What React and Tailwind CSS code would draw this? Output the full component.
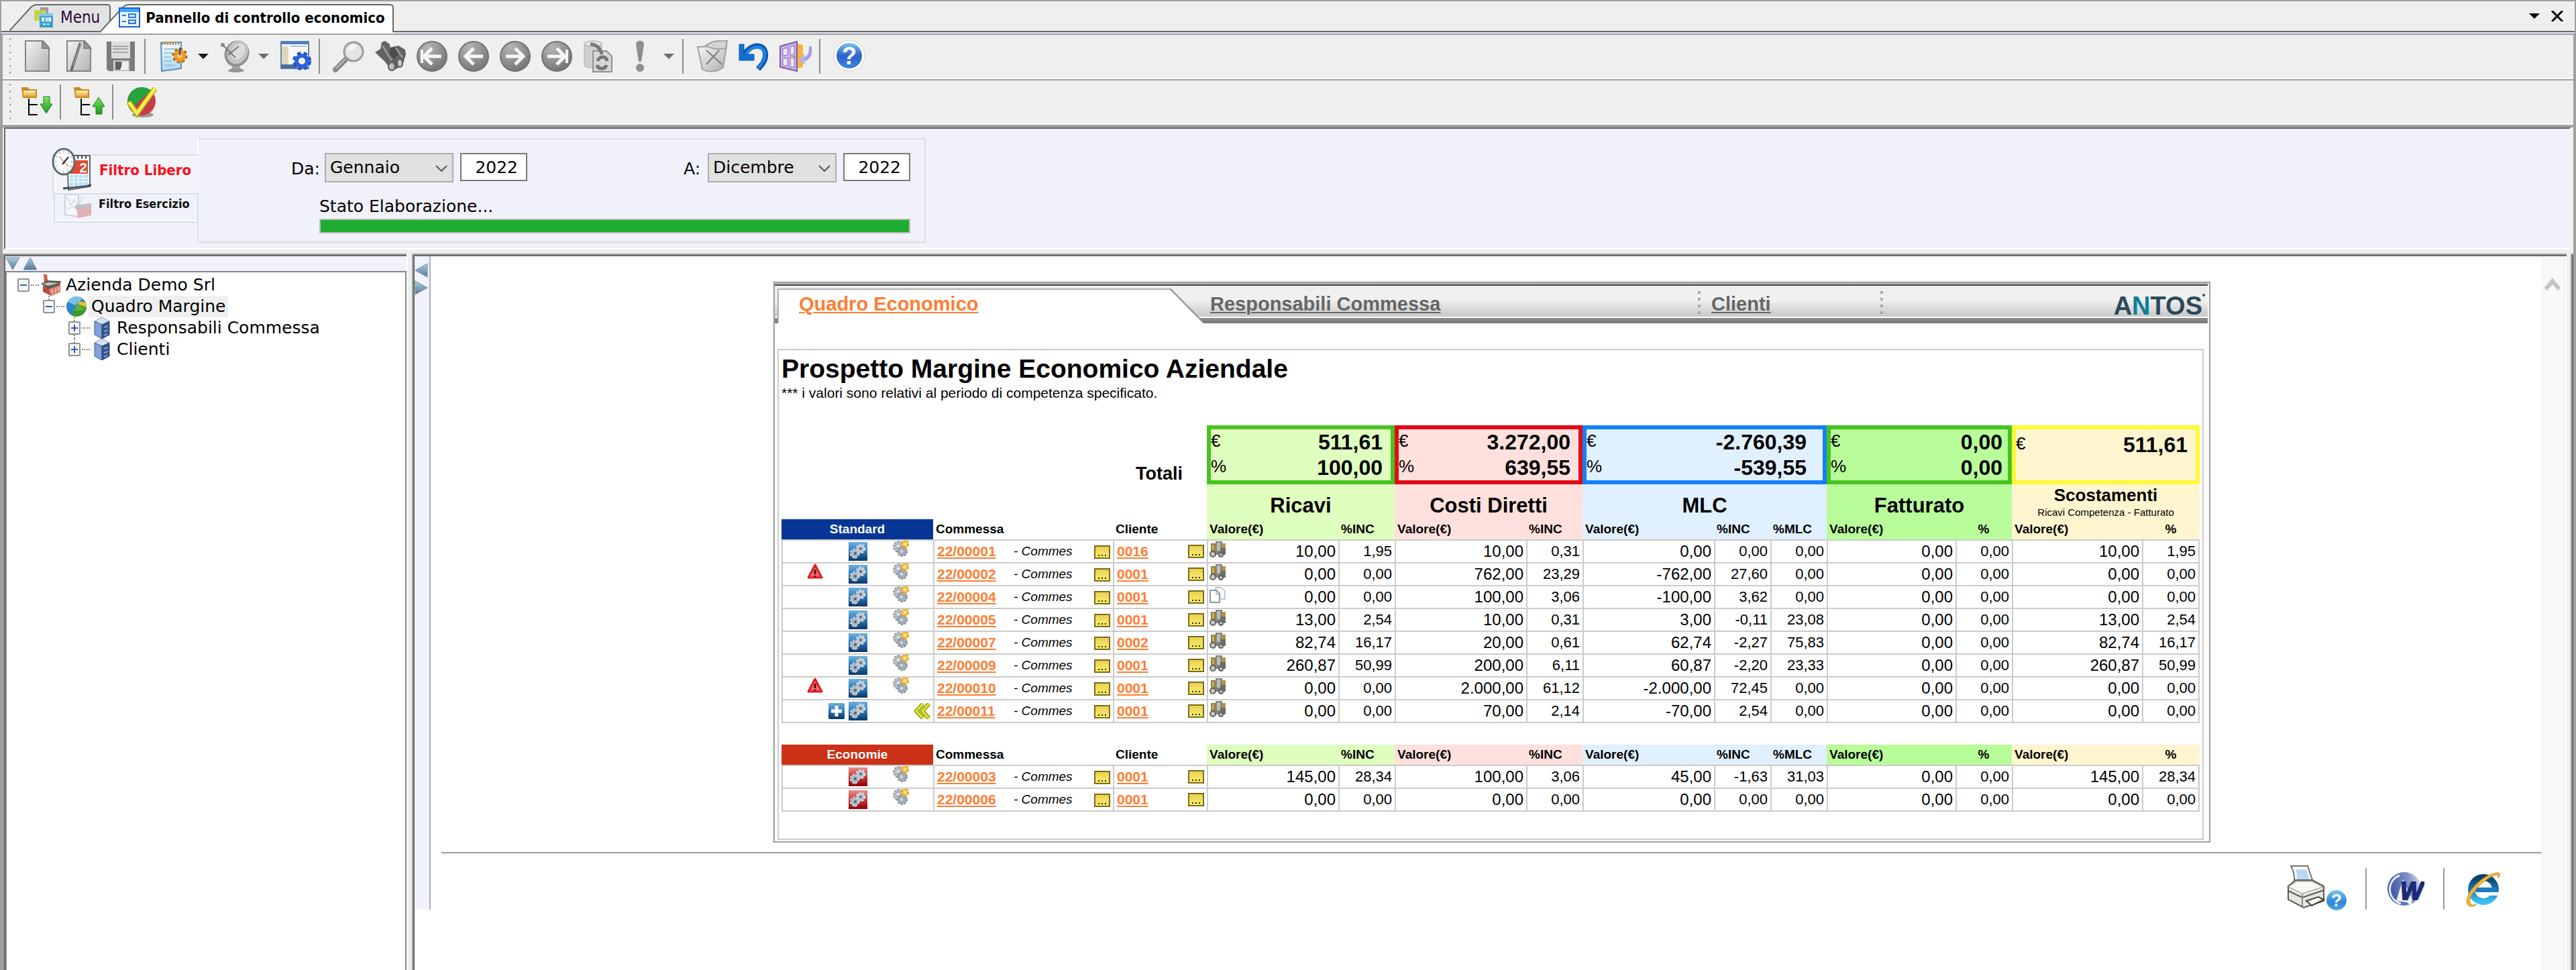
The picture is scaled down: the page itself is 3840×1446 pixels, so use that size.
import React from 'react';

/* ---------- shared gradients ---------- */

const Gradients = () => (
    <svg className="absolute w-0 h-0" aria-hidden="true">
        <defs>
            <linearGradient id="gSilver" x1="0" y1="0" x2="1" y2="1">
                <stop offset="0" stopColor="#f4f4f4" />
                <stop offset="1" stopColor="#b2b2b2" />
            </linearGradient>
            <radialGradient id="gCircle" cx="0.35" cy="0.2" r="0.9">
                <stop offset="0" stopColor="#b4b4b4" />
                <stop offset="1" stopColor="#707070" />
            </radialGradient>
            <linearGradient id="gBlue" x1="0" y1="0" x2="0" y2="1">
                <stop offset="0" stopColor="#6db3e0" />
                <stop offset="0.5" stopColor="#2c78b8" />
                <stop offset="1" stopColor="#0b3765" />
            </linearGradient>
            <linearGradient id="gRed" x1="0" y1="0" x2="0" y2="1">
                <stop offset="0" stopColor="#ee8c8c" />
                <stop offset="0.5" stopColor="#c63a3a" />
                <stop offset="1" stopColor="#8e0000" />
            </linearGradient>
            <linearGradient id="gHelp" x1="0" y1="0" x2="0" y2="1">
                <stop offset="0" stopColor="#7cc4f8" />
                <stop offset="0.5" stopColor="#2f62cc" />
                <stop offset="1" stopColor="#3a82e0" />
            </linearGradient>
            <linearGradient id="gHelpLight" x1="0" y1="0" x2="0" y2="1">
                <stop offset="0" stopColor="#7cc4f8" />
                <stop offset="0.6" stopColor="#2f86d8" />
                <stop offset="1" stopColor="#4aa4ee" />
            </linearGradient>
            <linearGradient id="gGold" x1="0" y1="0" x2="0" y2="1">
                <stop offset="0" stopColor="#fff3b4" />
                <stop offset="1" stopColor="#e0a030" />
            </linearGradient>
            <linearGradient id="gGreen" x1="0" y1="0" x2="0" y2="1">
                <stop offset="0" stopColor="#7fe06a" />
                <stop offset="1" stopColor="#1f9a1c" />
            </linearGradient>
            <linearGradient id="gNote" x1="0" y1="0" x2="0" y2="1">
                <stop offset="0" stopColor="#e8cf4e" />
                <stop offset="0.4" stopColor="#f0dc60" />
                <stop offset="1" stopColor="#fbf060" />
            </linearGradient>
            <linearGradient id="gArrow" x1="0" y1="0" x2="0" y2="1">
                <stop offset="0" stopColor="#a9cde0" />
                <stop offset="1" stopColor="#587a94" />
            </linearGradient>
            <linearGradient id="gSky" x1="0" y1="0" x2="0" y2="1">
                <stop offset="0" stopColor="#f2fafe" />
                <stop offset="1" stopColor="#a8d8f2" />
            </linearGradient>
            <linearGradient id="gIe" x1="0" y1="0" x2="0" y2="1">
                <stop offset="0" stopColor="#0e3f63" />
                <stop offset="0.55" stopColor="#1b7cc0" />
                <stop offset="1" stopColor="#3cc0f4" />
            </linearGradient>
            <linearGradient id="gWord" x1="0" y1="0.2" x2="1" y2="0">
                <stop offset="0" stopColor="#3a58a4" />
                <stop offset="0.6" stopColor="#7f92c8" />
                <stop offset="1" stopColor="#dfe4f2" />
            </linearGradient>
        </defs>
    </svg>
);

/* ---------- toolbar icons ---------- */

const Icon = ({ children }) => (
    <svg className="w-12 h-12" viewBox="0 0 48 48" aria-hidden="true">{children}</svg>
);

const NewDocIcon = () => (
    <Icon>
        <path d="M6 1h26l9 10v35H6z" fill="url(#gSilver)" stroke="#858585" strokeWidth="2" />
        <path d="M31 1v11h10z" fill="#9a9a9a" stroke="#858585" strokeWidth="2" />
    </Icon>
);

const EditDocIcon = () => (
    <Icon>
        <path d="M6 1h26l9 10v35H6z" fill="url(#gSilver)" stroke="#858585" strokeWidth="2" />
        <path d="M31 1v11h10z" fill="#9a9a9a" stroke="#858585" strokeWidth="2" />
        <path d="M26 4 L12 46" stroke="#6a6a6a" strokeWidth="4" />
        <path d="M27 4 L15 38" stroke="#bdbdbd" strokeWidth="1" />
    </Icon>
);

const SaveIcon = () => (
    <Icon>
        <path d="M3 2h42v44H6l-3-3z" fill="#7b7b7b" />
        <path d="M10 2h28v25H10z" fill="#dedede" />
        <path d="M12 9h23M12 13h23M12 18h23" stroke="#a6a6a6" strokeWidth="2" />
        <path d="M13 30h24v16H13z" fill="#c9c9c9" />
        <path d="M16 32h9v12h-9z" fill="#5f5f5f" />
        <path d="M28 32h7v12h-12z" fill="#f0f0f0" />
    </Icon>
);

const NotepadIcon = () => (
    <Icon>
        <path d="M4 4 L34 3 L34 42 L5 46z" fill="url(#gSky)" stroke="#5d8fb8" strokeWidth="2" />
        <path d="M6 2v5M10 2v5M14 2v5M18 2v5M22 2v5M26 2v5M30 2v5" stroke="#b89045" strokeWidth="2" />
        <path d="M9 13h18M9 19h12M9 25h10M9 31h12M9 37h16" stroke="#9cc4dc" strokeWidth="2" />
        <circle cx="32" cy="23" r="9" fill="none" stroke="#b5640c" strokeWidth="5" strokeDasharray="4 3" />
        <circle cx="32" cy="23" r="9" fill="#ea9620" />
        <circle cx="32" cy="23" r="4" fill="#f8c468" />
        <path d="M32 11v11" stroke="#4a5a6c" strokeWidth="3" />
    </Icon>
);

const DishIcon = () => (
    <Icon>
        <path d="M22 34h8l4 12H18z" fill="#a8a8a8" />
        <ellipse cx="26" cy="45" rx="12" ry="3" fill="#949494" />
        <ellipse cx="27" cy="20" rx="18" ry="20" transform="rotate(28 27 20)" fill="#8f8f8f" />
        <ellipse cx="28" cy="18" rx="15" ry="18" transform="rotate(28 28 18)" fill="#c4c4c4" />
        <ellipse cx="29" cy="17" rx="9" ry="13" transform="rotate(28 29 17)" fill="#dcdcdc" />
        <path d="M5 6 L25 26 M14 22 L30 9" stroke="#777" strokeWidth="2" />
        <circle cx="6" cy="7" r="3" fill="#8a8a8a" />
    </Icon>
);

const WindowGearIcon = () => (
    <Icon>
        <path d="M3 2h41v40H3z" fill="#fbfbf6" stroke="#6a86a6" strokeWidth="2" />
        <path d="M3 2h41v4H3z" fill="#4f7ec2" />
        <path d="M4 9h10v28H4z" fill="#ddd7bc" />
        <path d="M17 9h24" stroke="#a9c0dc" strokeWidth="2" />
        <path d="M3 36h24v6H3z" fill="#4b6da0" />
        <circle cx="34" cy="31" r="11" fill="none" stroke="#1d4ec4" strokeWidth="6" strokeDasharray="5 4" />
        <circle cx="34" cy="31" r="8" fill="none" stroke="#2b62dc" strokeWidth="6" />
        <circle cx="34" cy="31" r="4" fill="#eef3ff" />
    </Icon>
);

const MagnifierIcon = () => (
    <Icon>
        <path d="M4 44 L20 28" stroke="#8a8a8a" strokeWidth="8" strokeLinecap="round" />
        <path d="M5 42 L19 28" stroke="#b8b8b8" strokeWidth="2" />
        <circle cx="31" cy="17" r="14" fill="#e4e4e4" stroke="#9b9b9b" strokeWidth="3" />
        <path d="M22 15a10 10 0 0 1 14-7c-4 6-8 8-14 7z" fill="#f8f8f8" />
    </Icon>
);

const BinocularsIcon = () => (
    <Icon>
        <path d="M1 18 L9 13 L11 3 L16 1 L23 6 L24 11 L36 8 L46 14 L47 21 L42 38 L26 46 L16 32z" fill="#636363" />
        <path d="M24 11 L34 9 L38 18 L30 28 L22 22z" fill="#4c4c4c" />
        <path d="M32 11 L42 26 M12 8 L26 30" stroke="#959595" strokeWidth="3" />
        <ellipse cx="26" cy="39" rx="5" ry="6" fill="#bcbcbc" stroke="#5c5c5c" strokeWidth="2" />
        <ellipse cx="38" cy="34" rx="4" ry="6" fill="#c8c8c8" stroke="#5c5c5c" strokeWidth="2" />
    </Icon>
);

const CircleArrowIcon = ({ dir, bar }) => (
    <Icon>
        <circle cx="24" cy="24" r="22" fill="url(#gCircle)" stroke="#727272" strokeWidth="2" />
        <g transform={dir === 'left' ? undefined : 'rotate(180 24 24)'} stroke="#f6f6f6" strokeWidth="5" fill="none">
            <path d="M38 24H14M24 12 L12 24 L24 36" />
            {bar && <path d="M9 14v20" strokeWidth="4" />}
        </g>
    </Icon>
);

const RefreshCopyIcon = () => (
    <Icon>
        <path d="M3 5c0-5 26-5 26 0v33c0 4-26 4-26 0z" fill="#cfcfcf" stroke="#b3b3b3" />
        <ellipse cx="16" cy="5" rx="13" ry="4" fill="#e3e3e3" stroke="#b3b3b3" />
        <path d="M16 16h20l8 8v23H16z" fill="#d6d6d6" stroke="#909090" strokeWidth="2" />
        <path d="M12 6c8 0 15 5 17 15" stroke="#7a7a7a" strokeWidth="5" fill="none" />
        <path d="M23 31c2-8 13-8 14 0M36 37c-2 7-12 7-14 0" stroke="#747474" strokeWidth="5" fill="none" />
    </Icon>
);

const BangIcon = () => (
    <Icon>
        <path d="M18 6c0-7 12-7 12 0l-4 26h-4z" fill="#8e8e8e" />
        <circle cx="24" cy="41" r="6" fill="#8e8e8e" />
    </Icon>
);

const TrashIcon = () => (
    <Icon>
        <path d="M2 10 L45 8 L40 40 C32 48 16 48 9 43z" fill="url(#gSilver)" stroke="#a0a0a0" strokeWidth="2" />
        <path d="M14 8 C24 0 36 0 46 1 L44 12 C34 14 24 14 14 8z" fill="#d4d4d4" stroke="#a0a0a0" strokeWidth="2" />
        <path d="M15 15 L38 36 M34 15 L15 36" stroke="#7c7c7c" strokeWidth="2" />
    </Icon>
);

const UndoIcon = () => (
    <Icon>
        <path d="M8 24 C18 4 40 4 41 20 C42 30 36 36 30 43" stroke="#0b55ae" strokeWidth="8" fill="none" />
        <path d="M10 24 C18 6 39 6 40 20 C41 29 35 36 30 42" stroke="#1c86e4" strokeWidth="4" fill="none" />
        <path d="M2 6h7v15h15v9H2z" fill="#1470d0" stroke="#0b55ae" strokeWidth="1" />
    </Icon>
);

const ExitIcon = () => (
    <Icon>
        <path d="M26 5 L35 7 L35 40 L26 42z" fill="#f6b63c" />
        <path d="M1 9 L26 2 L26 46 L1 40z" fill="#c6b2e4" stroke="#7d5ca8" strokeWidth="2" />
        <path d="M5 13 L12 11 L12 22 L5 23zM16 10 L22 8 L22 21 L16 22zM5 27h7v11H5zM16 26h6v14h-6z" fill="#efe8fa" stroke="#8a6cb8" />
        <circle cx="22" cy="25" r="2" fill="#d8901c" />
        <path d="M46 9 C48 22 42 28 33 30" stroke="#a79be6" strokeWidth="5" fill="none" />
        <path d="M37 20 L28 30 L38 36z" fill="#b9b0ee" />
    </Icon>
);

const HelpIcon = () => (
    <Icon>
        <circle cx="24" cy="23" r="23" fill="#fff" stroke="#cfcfcf" />
        <circle cx="24" cy="23" r="19" fill="url(#gHelp)" />
        <text x="24" y="36" textAnchor="middle" fontFamily="Liberation Sans, sans-serif" fontWeight="bold" fontSize="36" fill="#fff">?</text>
    </Icon>
);

const TreeArrowIcon = ({ up }) => (
    <Icon>
        <path d="M1 2h9l3 3h11v13H3z" fill="#c98a1c" />
        <path d="M4 7h18v9H4z" fill="url(#gGold)" />
        <path d="M12 19v25M12 28h13M12 43h13" stroke="#000" strokeWidth="2" fill="none" />
        {up ? (
            <path d="M38 17 L47 31 H43 V42 H34 V31 H29z" fill="url(#gGreen)" stroke="#14820f" />
        ) : (
            <path d="M38 41 L47 27 H43 V16 H34 V27 H29z" fill="url(#gGreen)" stroke="#14820f" />
        )}
    </Icon>
);

const CheckIcon = () => (
    <Icon>
        <ellipse cx="26" cy="43" rx="16" ry="4" fill="#9a9a9a" />
        <circle cx="24" cy="23" r="21" fill="#c83c48" />
        <path d="M24 2a21 21 0 0 0-17 33 L38 7A21 21 0 0 0 24 2z" fill="#22a53e" />
        <path d="M5 24 L17 41 L44 4" fill="none" stroke="#b0a018" strokeWidth="8" />
        <path d="M5 24 L17 41 L44 4" fill="none" stroke="#f6ee48" strokeWidth="5" />
    </Icon>
);

const Caret = ({ dark }) => (
    <svg className="w-4 h-2 ml-1" viewBox="0 0 16 8" aria-hidden="true">
        <path d="M0 0h16L8 8z" fill={dark ? '#1c1c1c' : '#6e6e6e'} />
    </svg>
);

/* ---------- small icons ---------- */

const MenuTabIcon = () => (
    <svg className="w-8 h-8" viewBox="0 0 32 32" aria-hidden="true">
        <path d="M10 1h12v10h-4V5h-8z" fill="#9a9a9a" />
        <path d="M1 5h16v16H1z" fill="#c3d24f" />
        <path d="M9 10h20v21H9z" fill="#38a2d0" />
        <path d="M9 10h20v4H9z" fill="#7cc8e6" />
        <path d="M12 16h4v6h-4zM18 16h3v6h-3zM22 16h4v6h-4zM14 25h4v2h-4zM20 25h3v2h-3z" fill="#f2fafd" />
    </svg>
);

const PanelTabIcon = () => (
    <svg className="w-8 h-8" viewBox="0 0 32 32" aria-hidden="true">
        <path d="M1 2h30v28H1z" fill="#eef6ff" stroke="#1c5ed8" strokeWidth="2" />
        <path d="M2 3h28v5H2z" fill="#3fa6f4" />
        <path d="M5 13h6M5 22h6" stroke="#2c78e0" strokeWidth="2" />
        <path d="M15 11h10v5H15zM15 20h10v5H15z" fill="#cfe6ff" stroke="#2c78e0" strokeWidth="2" />
    </svg>
);

const ClockCalendarIcon = () => (
    <svg className="w-16 h-16 shrink-0" viewBox="0 0 64 64" aria-hidden="true">
        <path d="M24 12h34v46L26 63z" fill="#fdfdfd" stroke="#60666c" strokeWidth="2" />
        <path d="M18 61 L60 56" stroke="#454b50" strokeWidth="3" />
        <path d="M27 19h28v20H27z" fill="#dd4a33" />
        <text x="48" y="37" textAnchor="middle" fontFamily="Liberation Sans, sans-serif" fontWeight="bold" fontSize="20" fill="#fff">2</text>
        <path d="M28 41h27v15l-27 3z" fill="#b9dcf2" />
        <path d="M28 46h27M28 51h27M34 41v17M41 41v16M48 41v15" stroke="#e6f2fa" strokeWidth="2" />
        <path d="M34 11v6M40 11v6M46 11v6M52 11v6" stroke="#555" strokeWidth="2" />
        <ellipse cx="19" cy="21" rx="16" ry="19" fill="#fff" stroke="#5d6b74" strokeWidth="3" />
        <ellipse cx="19" cy="21" rx="12" ry="15" fill="none" stroke="#8a949a" strokeWidth="3" strokeDasharray="1 6" />
        <path d="M12 13 L20 22 L26 28" stroke="#cc2a2a" strokeWidth="1" fill="none" />
        <path d="M26 14 L17 25" stroke="#222" strokeWidth="2" />
    </svg>
);

const ChartFactoryIcon = () => (
    <svg className="w-11 h-9 shrink-0 opacity-40" viewBox="0 0 44 36" aria-hidden="true">
        <path d="M3 0v30l20 3V0z" fill="#fff" stroke="#8fa0b4" strokeWidth="2" />
        <path d="M6 4l6 12 5-9 6 10 6-14M6 22l10-4 8 2" stroke="#3fae6a" strokeWidth="1" fill="none" />
        <path d="M20 20l22-4v15l-20 4z" fill="#c9524c" />
        <path d="M18 16l24-3v5l-24 4z" fill="#777" />
    </svg>
);

const FactoryIcon = () => (
    <svg className="w-8 h-8" viewBox="0 0 32 32" aria-hidden="true">
        <path d="M5 0h5l2 14H6z" fill="#d05a50" />
        <path d="M4 17l8 4 18-6v11l-14 6-12-6z" fill="#c4443c" />
        <path d="M12 21l18-6v11l-14 6z" fill="#dc7a72" />
        <path d="M1 14l10-5 20 1-2 6-17 6z" fill="#5c5c56" />
        <path d="M4 14l9-2 14 1-15 4z" fill="#c8c8bc" />
        <path d="M18 22v6M23 21v6M27 19v6" stroke="#fff" strokeWidth="1" />
    </svg>
);

const PieIcon = () => (
    <svg className="w-8 h-8" viewBox="0 0 32 32" aria-hidden="true">
        <circle cx="16" cy="16" r="15" fill="#2d86c4" />
        <path d="M3 9a15 15 0 0 1 22-5L14 14z" fill="#7cc2ea" />
        <path d="M16 16 L20 8 L30 10 L31 17z" fill="#f2bd24" />
        <path d="M17 12 L31 17a15 15 0 0 1-22 12z" fill="#3f9a26" />
        <path d="M17 12 L28 19 L22 22 L12 22z" fill="#5cb03c" />
    </svg>
);

const ServerIcon = () => (
    <svg className="w-8 h-8" viewBox="0 0 32 32" aria-hidden="true">
        <path d="M5 6 L16 0 L27 6 L16 11z" fill="#d4e2f4" stroke="#8096b4" />
        <path d="M5 6 L16 11 V32 L5 26z" fill="#7fa3d8" stroke="#3c5c92" />
        <path d="M27 6 L16 11 V32 L27 26z" fill="#34528c" stroke="#2c4678" />
        <path d="M19 15l6-2M19 21l6-2M19 27l5-2" stroke="#7f9fd0" strokeWidth="2" />
    </svg>
);

const GearBoxIcon = ({ red }) => (
    <svg className="w-7 h-7" viewBox="0 0 28 28" aria-hidden="true">
        <path d="M0 0h28v28H0z" fill={red ? 'url(#gRed)' : 'url(#gBlue)'} />
        <circle cx="18" cy="10" r="6" fill="#b8c4d0" stroke="#d0d8e0" strokeWidth="3" strokeDasharray="3 2" />
        <circle cx="18" cy="10" r="2" fill="#5a6a7c" />
        <circle cx="9" cy="17" r="6" fill="#a9b5c2" stroke="#c4ced8" strokeWidth="3" strokeDasharray="3 2" />
        <circle cx="10" cy="17" r="2" fill="#4e5e70" />
        <circle cx="10" cy="23" r="2" fill="#b4c0cc" />
    </svg>
);

const GearsIcon = () => (
    <svg className="w-6 h-6" viewBox="0 0 24 24" aria-hidden="true">
        <circle cx="9" cy="9" r="8" fill="#b4bcc4" stroke="#939da6" strokeWidth="2" strokeDasharray="3 2" />
        <circle cx="8" cy="8" r="2" fill="#e6eaee" />
        <circle cx="14" cy="16" r="7" fill="#a2acb6" stroke="#848f9a" strokeWidth="2" strokeDasharray="3 2" />
        <circle cx="13" cy="16" r="2" fill="#dde2e6" />
        <circle cx="18" cy="5" r="5" fill="#fbc84a" stroke="#eda424" strokeWidth="3" strokeDasharray="3 2" />
        <circle cx="18" cy="5" r="2" fill="#fff0b4" />
    </svg>
);

const AlertIcon = () => (
    <svg className="w-6 h-6" viewBox="0 0 24 24" aria-hidden="true">
        <path d="M12 2 L22 21 H2z" fill="#f46a6a" stroke="#dd1c24" strokeWidth="3" strokeLinejoin="round" />
        <path d="M12 9v7M12 18v2" stroke="#5c0a0c" strokeWidth="3" />
    </svg>
);

const PlusBoxIcon = () => (
    <svg className="w-6 h-6" viewBox="0 0 24 24" aria-hidden="true">
        <rect width="24" height="24" rx="2" fill="url(#gBlue)" />
        <path d="M12 4v16M4 12h16" stroke="#fff" strokeWidth="5" />
    </svg>
);

const BackIcon = () => (
    <svg className="w-6 h-6" viewBox="0 0 24 24" aria-hidden="true">
        <path d="M13 1 L3 12 L13 23 M22 1 L12 12 L22 23" stroke="#8f9a10" strokeWidth="6" fill="none" />
        <path d="M13 1 L3 12 L13 23 M22 1 L12 12 L22 23" stroke="#e6e82c" strokeWidth="3" fill="none" />
    </svg>
);

const NoteIcon = () => (
    <svg className="w-6 h-5" viewBox="0 0 24 20" aria-hidden="true">
        <path d="M1 1h22v18H1z" fill="url(#gNote)" stroke="#7d6a1c" strokeWidth="2" />
        <path d="M6 14h2v2H6zM11 14h2v2h-2zM16 14h2v2h-2z" fill="#2c2400" />
    </svg>
);

const TruckIcon = () => (
    <svg className="w-6 h-6" viewBox="0 0 24 24" aria-hidden="true">
        <path d="M2 3h8v13H2z" fill="#96803f" />
        <path d="M4 5h3v8H4z" fill="#c9ac5c" />
        <path d="M9 0h10v20H9z" fill="#83837f" />
        <path d="M11 2h5v12h-5z" fill="#bdbdb8" />
        <path d="M18 3h6v8h-6z" fill="#b0924c" />
        <path d="M16 10h8v10h-8z" fill="#6e6e6a" />
        <circle cx="5" cy="19" r="4" fill="#c8c8c4" stroke="#62625e" strokeWidth="2" />
        <circle cx="17" cy="20" r="3" fill="#c8c8c4" stroke="#62625e" strokeWidth="2" />
    </svg>
);

const PagesIcon = () => (
    <svg className="w-6 h-6" viewBox="0 0 24 24" aria-hidden="true">
        <path d="M9 1h9l5 5v12H9z" fill="#f6f8fb" stroke="#8b95a4" strokeWidth="1" />
        <path d="M1 5h9l5 5v13H1z" fill="#fff" stroke="#8b95a4" strokeWidth="2" />
        <path d="M10 5v6h5" fill="none" stroke="#8b95a4" strokeWidth="1" />
    </svg>
);

const Triangle = ({ points, className }) => (
    <svg className={className} viewBox="0 0 22 20" preserveAspectRatio="none" aria-hidden="true">
        <polygon points={points} fill="url(#gArrow)" stroke="#7693a8" />
    </svg>
);

const PrinterIcon = () => (
    <svg className="w-[90px] h-[70px]" viewBox="0 0 90 70" aria-hidden="true">
        <path d="M5 1h25l8 24H10C11 14 9 8 5 1z" fill="#fafcff" stroke="#77756c" strokeWidth="2" />
        <path d="M12 6h16l5 16H14c0-7 0-11-2-16z" fill="#b9d8f8" />
        <path d="M1 31 L12 22 H37 L54 31 V53 L24 63 L1 51z" fill="#e6e6e2" stroke="#5c5a50" strokeWidth="2" />
        <path d="M1 32 L13 24 H36 L53 32 L22 42z" fill="#f8f8f5" stroke="#8d8b80" strokeWidth="1" />
        <path d="M1 38 L22 48 L54 37" stroke="#5c5a50" strokeWidth="2" fill="none" />
        <path d="M22 43v18" stroke="#8d8b80" strokeWidth="2" />
        <path d="M28 53 L46 47 L54 51 L36 60z" fill="#fff" stroke="#444238" strokeWidth="2" />
        <circle cx="73" cy="52" r="15" fill="url(#gHelpLight)" />
        <text x="73" y="61" textAnchor="middle" fontFamily="Liberation Sans, sans-serif" fontWeight="bold" fontSize="26" fill="#fff">?</text>
    </svg>
);

const WordIcon = () => (
    <svg className="w-14 h-14" viewBox="0 0 56 56" aria-hidden="true">
        <circle cx="26" cy="28" r="25" fill="url(#gWord)" />
        <path d="M19 8a22 22 0 0 0 2 42" stroke="#e4e9f6" strokeWidth="3" fill="none" />
        <path d="M24 14 L14 46 L30 48 L36 53 L38 44z" fill="#f0f2f8" />
        <text x="37" y="44" textAnchor="middle" fontFamily="Liberation Sans, sans-serif" fontWeight="bold" fontStyle="italic" fontSize="36" fill="#1d2a78" stroke="#1d2a78" strokeWidth="2">W</text>
    </svg>
);

const BrowserIcon = () => (
    <svg className="w-14 h-14" viewBox="0 0 56 56" aria-hidden="true">
        <circle cx="30" cy="29" r="18" fill="none" stroke="url(#gIe)" strokeWidth="10" />
        <path d="M18 26h30v7H18z" fill="#1b7cc0" />
        <path d="M34 33h22v5H34z" fill="#fff" />
        <path d="M8 53 C-4 44 24 6 52 4 C56 4 54 9 52 12 C53 7 50 6 46 8 C26 16 2 44 12 51 C14 53 18 52 20 51 C16 54 11 55 8 53z" fill="#f2b632" stroke="#c98a1c" strokeWidth="1" />
    </svg>
);

/* ---------- window tabs and toolbars ---------- */

const TabBar = () => (
    <div className="flex h-[50px] shrink-0 border-t-2 border-x-2 border-[#a0a0a0] bg-[#efefef]">
        <div className="flex flex-1 items-end border-b-2 border-[#e4e4f8]">
            <div className="flex h-[46px] flex-1 items-end border-b-2 border-[#696969]">
                <div className="relative flex h-10 items-center pl-12">
                    <svg className="absolute left-3 top-0 h-full w-[152px]" viewBox="0 0 152 40" aria-hidden="true">
                        <path d="M0 40 L32 5 Q36 1 42 1 H146 Q150 1 150 5 V40" fill="#e3e3e3" stroke="#696969" strokeWidth="2" />
                    </svg>
                    <button className="relative flex items-center gap-2 text-[24px] text-[#2a0a3a] font-['DejaVu_Sans_Condensed',sans-serif]">
                        <MenuTabIcon />
                        Menu
                    </button>
                </div>
                <div className="relative flex h-10 items-center self-end pl-7">
                    <svg className="absolute left-0 -bottom-1 h-11 w-[438px]" viewBox="0 0 438 44" aria-hidden="true">
                        <path d="M-2 44 L34 5 Q38 1 44 1 H432 Q437 1 437 6 V42 H438 V44z" fill="#fff" />
                        <path d="M-2 44 L34 5 Q38 1 44 1 H432 Q437 1 437 6 V42" fill="none" stroke="#696969" strokeWidth="2" />
                    </svg>
                    <button className="relative flex items-center gap-2 text-[22px] font-bold text-black font-['DejaVu_Sans_Condensed',sans-serif]">
                        <PanelTabIcon />
                        Pannello di controllo economico
                    </button>
                </div>
                <div className="ml-auto flex h-full items-center gap-4 pr-4">
                    <button aria-label="Elenco schede">
                        <svg className="w-4 h-2" viewBox="0 0 16 8"><path d="M0 0h16L8 8z" fill="#000" /></svg>
                    </button>
                    <button aria-label="Chiudi">
                        <svg className="w-5 h-4" viewBox="0 0 20 16"><path d="M2 0 L18 16 M18 0 L2 16" stroke="#000" strokeWidth="3" /></svg>
                    </button>
                </div>
            </div>
        </div>
    </div>
);

const Grip = () => (
    <div className="mr-[7px] flex flex-col gap-[6px]">
        {[0, 1, 2, 3, 4, 5].map((i) => (
            <span key={i} className="h-1 w-1 border-b border-r border-white bg-[#b4b4b4]"></span>
        ))}
    </div>
);

const Sep = () => <div className="ml-1 mr-3 h-[52px] w-[2px] bg-[#8c8c8c]"></div>;

const ToolButton = ({ label, width = 'w-[62px]', children }) => (
    <button aria-label={label} className={`flex items-center justify-center ${width}`}>{children}</button>
);

const DropButton = ({ label, dark }) => (
    <button aria-label={label} className="flex w-7 items-center"><Caret dark={dark} /></button>
);

const MainToolbar = () => (
    <div className="flex h-[68px] shrink-0 items-center border-t-2 border-b-2 border-t-[#a0a0a0] border-b-white pl-[10px]">
        <Grip />
        <ToolButton label="Nuovo"><NewDocIcon /></ToolButton>
        <ToolButton label="Modifica"><EditDocIcon /></ToolButton>
        <ToolButton label="Salva"><SaveIcon /></ToolButton>
        <Sep />
        <ToolButton label="Azioni"><NotepadIcon /></ToolButton>
        <DropButton label="Altre azioni" dark />
        <ToolButton label="Trasmetti"><DishIcon /></ToolButton>
        <DropButton label="Opzioni trasmissione" />
        <ToolButton label="Impostazioni"><WindowGearIcon /></ToolButton>
        <Sep />
        <ToolButton label="Zoom"><MagnifierIcon /></ToolButton>
        <ToolButton label="Cerca"><BinocularsIcon /></ToolButton>
        <ToolButton label="Primo"><CircleArrowIcon dir="left" bar /></ToolButton>
        <ToolButton label="Precedente"><CircleArrowIcon dir="left" /></ToolButton>
        <ToolButton label="Successivo"><CircleArrowIcon dir="right" /></ToolButton>
        <ToolButton label="Ultimo"><CircleArrowIcon dir="right" bar /></ToolButton>
        <ToolButton label="Aggiorna"><RefreshCopyIcon /></ToolButton>
        <ToolButton label="Esegui"><BangIcon /></ToolButton>
        <DropButton label="Opzioni esecuzione" />
        <Sep />
        <ToolButton label="Elimina"><TrashIcon /></ToolButton>
        <ToolButton label="Annulla"><UndoIcon /></ToolButton>
        <ToolButton label="Esci"><ExitIcon /></ToolButton>
        <Sep />
        <ToolButton label="Guida"><HelpIcon /></ToolButton>
    </div>
);

const TreeToolbar = () => (
    <div className="flex h-[68px] shrink-0 items-center border-t-2 border-b-2 border-t-[#a0a0a0] border-b-white pl-[10px]">
        <Grip />
        <ToolButton label="Espandi" width="w-[60px]"><TreeArrowIcon /></ToolButton>
        <Sep />
        <ToolButton label="Comprimi" width="w-[60px]"><TreeArrowIcon up /></ToolButton>
        <Sep />
        <ToolButton label="Conferma" width="w-[60px]"><CheckIcon /></ToolButton>
    </div>
);

/* ---------- filter panel ---------- */

const MONTHS = ['Gennaio', 'Febbraio', 'Marzo', 'Aprile', 'Maggio', 'Giugno', 'Luglio', 'Agosto', 'Settembre', 'Ottobre', 'Novembre', 'Dicembre'];

const Period = ({ id, label, month, labelClass }) => (
    <div className="flex items-start">
        <label htmlFor={id} className={`${labelClass} leading-[48px]`}>{label}</label>
        <div className="relative">
            <select id={id} defaultValue={month} className="h-11 w-48 appearance-none rounded-none border-2 border-[#adadad] bg-[#e1e1e1] pl-[6px] text-[25px] leading-10">
                {MONTHS.map((m) => <option key={m}>{m}</option>)}
            </select>
            <svg className="pointer-events-none absolute right-2 top-[18px] h-[10px] w-5" viewBox="0 0 20 10" aria-hidden="true">
                <path d="M2 1 L10 9 L18 1" fill="none" stroke="#555" strokeWidth="2" />
            </svg>
        </div>
        <input aria-label={`${label} anno`} defaultValue="2022" className="ml-[10px] h-[42px] w-[100px] rounded-none border-2 border-[#7a7a7a] bg-white pr-3 text-right text-[25px]" />
    </div>
);

const FilterPanel = () => (
    <div className="shrink-0 border-t-4 border-[#a0a0a0] pl-[2px] pr-1">
        <div className="flex h-[182px] border-t-2 border-l-2 border-r-2 border-b-2 border-t-[#696969] border-l-[#696969] border-r-[#efefef] border-b-white bg-[#f1f1fb] pl-[68px] pt-[14px] pb-2 font-['DejaVu_Sans',sans-serif] text-[25px] text-black">
            <div className="flex w-[220px] flex-col">
                <div className="h-6 border-r-2 border-white"></div>
                <button className="ml-[2px] flex h-[60px] items-start border-2 border-r-0 border-[#d5dfe6] bg-[#f4f4fa] text-left">
                    <span className="-ml-1 -mt-3"><ClockCalendarIcon /></span>
                    <span className="pl-2 text-[22px] font-bold leading-[44px] text-[#fb0f1c] font-['DejaVu_Sans_Condensed',sans-serif]">Filtro Libero</span>
                </button>
                <button className="ml-1 flex h-[42px] items-start border-x-2 border-b-2 border-[#d5dfe6] text-left shadow-[inset_0_-2px_0_#fff]">
                    <span className="ml-3"><ChartFactoryIcon /></span>
                    <span className="pl-[9px] text-[18px] font-bold leading-[28px] text-[#111] font-['DejaVu_Sans_Condensed',sans-serif]">Filtro Esercizio</span>
                </button>
                <div className="flex-1 border-r-2 border-[#dfe3ea]"></div>
            </div>
            <div className="w-[1084px] border-2 border-l-0 border-[#dcdcdc] pt-5 pr-[21px]">
                <div className="flex justify-between pl-[138px]">
                    <Period id="da" label="Da:" month="Gennaio" labelClass="w-[50px]" />
                    <Period id="a" label="A:" month="Dicembre" labelClass="w-9" />
                </div>
                <div className="pl-[180px] pt-4">
                    <p id="stato" className="leading-8">Stato Elaborazione...</p>
                    <div role="progressbar" aria-labelledby="stato" aria-valuenow={100} className="mt-[2px] h-[22px] border-2 border-[#bcbcbc] bg-[#1eac30]"></div>
                </div>
            </div>
        </div>
    </div>
);

/* ---------- tree ---------- */

const TREE = [
    { label: 'Azienda Demo Srl', pad: 'pl-4', open: true, icon: FactoryIcon, above: false, below: false },
    { label: 'Quadro Margine', pad: 'pl-[54px]', open: true, icon: PieIcon, above: true, below: false, selected: true },
    { label: 'Responsabili Commessa', pad: 'pl-[92px]', open: false, icon: ServerIcon, above: true, below: true },
    { label: 'Clienti', pad: 'pl-[92px]', open: false, icon: ServerIcon, above: true, below: false },
];

const TreeRow = ({ node }) => {
    const NodeIcon = node.icon;
    return (
        <li className={`flex h-8 items-center ${node.pad}`}>
            <div className="flex h-8 flex-col items-center">
                <span className={`h-[6px] w-0 border-dotted border-[#8a8a8a] ${node.above ? 'border-l-2' : ''}`}></span>
                <button aria-label={node.open ? 'Comprimi nodo' : 'Espandi nodo'} className="h-5 w-[18px] rounded-xs border-2 border-[#919191] bg-[#f6f6f6]">
                    <svg className="h-full w-full" viewBox="0 0 14 16" aria-hidden="true">
                        <path d={node.open ? 'M2 8h10' : 'M2 8h10M7 3v10'} stroke="#3a5aa8" strokeWidth="2" />
                    </svg>
                </button>
                <span className={`h-[6px] w-0 border-dotted border-[#8a8a8a] ${node.below ? 'border-l-2' : ''}`}></span>
            </div>
            <span className="mx-[2px] w-3 border-t-2 border-dotted border-[#8a8a8a]"></span>
            <NodeIcon />
            <span className={`ml-[2px] px-1 leading-8 ${node.selected ? 'bg-[#efefef]' : ''}`}>{node.label}</span>
        </li>
    );
};

const TreePanel = () => (
    <div className="flex w-[600px] shrink-0 flex-col border-t-2 border-l-2 border-t-[#696969] border-l-[#696969] bg-[#f1f1fb]">
        <div className="flex h-[22px] items-center gap-1">
            <button aria-label="Espandi tutto"><Triangle points="1,1 21,1 11,19" className="h-5 w-[22px]" /></button>
            <button aria-label="Comprimi tutto"><Triangle points="11,1 21,19 1,19" className="h-5 w-[22px]" /></button>
        </div>
        <ul className="flex-1 border-2 border-b-0 border-[#828790] bg-white pt-[3px] font-['DejaVu_Sans',sans-serif] text-[25px] text-black">
            {TREE.map((node) => <TreeRow key={node.label} node={node} />)}
        </ul>
    </div>
);

/* ---------- report ---------- */

const GROUPS = [
    { title: 'Ricavi', cols: ['Valore(€)', '%INC'], bg: 'bg-[#dfffbf]', border: 'border-[#48c322]', pad: 'pr-3', total: ['511,61', '100,00'] },
    { title: 'Costi Diretti', cols: ['Valore(€)', '%INC'], bg: 'bg-[#ffe0dc]', border: 'border-[#e10b17]', pad: 'pr-3', total: ['3.272,00', '639,55'] },
    { title: 'MLC', cols: ['Valore(€)', '%INC', '%MLC'], bg: 'bg-[#e0f0ff]', border: 'border-[#1481fb]', pad: 'pr-6', total: ['-2.760,39', '-539,55'] },
    { title: 'Fatturato', cols: ['Valore(€)', '%'], bg: 'bg-[#b8fd9a]', border: 'border-[#48c322]', pad: 'pr-2', total: ['0,00', '0,00'] },
    { title: 'Scostamenti', sub: 'Ricavi Competenza - Fatturato', cols: ['Valore(€)', '%'], bg: 'bg-[#fff6cf]', border: 'border-[#fff936]', pad: 'pr-3', total: ['511,61'] },
];

const STANDARD = [
    { id: '22/00001', cliente: '0016', doc: 'truck', v: ['10,00', '1,95', '10,00', '0,31', '0,00', '0,00', '0,00', '0,00', '0,00', '10,00', '1,95'] },
    { id: '22/00002', cliente: '0001', doc: 'truck', alert: true, v: ['0,00', '0,00', '762,00', '23,29', '-762,00', '27,60', '0,00', '0,00', '0,00', '0,00', '0,00'] },
    { id: '22/00004', cliente: '0001', doc: 'pages', v: ['0,00', '0,00', '100,00', '3,06', '-100,00', '3,62', '0,00', '0,00', '0,00', '0,00', '0,00'] },
    { id: '22/00005', cliente: '0001', doc: 'truck', v: ['13,00', '2,54', '10,00', '0,31', '3,00', '-0,11', '23,08', '0,00', '0,00', '13,00', '2,54'] },
    { id: '22/00007', cliente: '0002', doc: 'truck', v: ['82,74', '16,17', '20,00', '0,61', '62,74', '-2,27', '75,83', '0,00', '0,00', '82,74', '16,17'] },
    { id: '22/00009', cliente: '0001', doc: 'truck', v: ['260,87', '50,99', '200,00', '6,11', '60,87', '-2,20', '23,33', '0,00', '0,00', '260,87', '50,99'] },
    { id: '22/00010', cliente: '0001', doc: 'truck', alert: true, v: ['0,00', '0,00', '2.000,00', '61,12', '-2.000,00', '72,45', '0,00', '0,00', '0,00', '0,00', '0,00'] },
    { id: '22/00011', cliente: '0001', doc: 'truck', closed: true, v: ['0,00', '0,00', '70,00', '2,14', '-70,00', '2,54', '0,00', '0,00', '0,00', '0,00', '0,00'] },
];

const ECONOMIE = [
    { id: '22/00003', cliente: '0001', v: ['145,00', '28,34', '100,00', '3,06', '45,00', '-1,63', '31,03', '0,00', '0,00', '145,00', '28,34'] },
    { id: '22/00006', cliente: '0001', v: ['0,00', '0,00', '0,00', '0,00', '0,00', '0,00', '0,00', '0,00', '0,00', '0,00', '0,00'] },
];

// columns of v that hold amounts, the others are percentages
const AMOUNTS = [0, 2, 4, 7, 9];

const HeadRow = ({ name, color }) => (
    <tr className="h-8 text-left text-[19px] leading-[30px]">
        <th scope="col" className={`border-b-2 border-[#cbcbcb] bg-clip-padding text-center text-white ${color}`}>{name}</th>
        <th scope="col" className="border-b-2 border-[#cbcbcb] pl-1">Commessa</th>
        <th scope="col" className="border-b-2 border-[#cbcbcb] pl-1">Cliente</th>
        {GROUPS.map((g) => g.cols.map((c) => (
            <th key={g.title + c} scope="col" className={`border-b-2 border-[#cbcbcb] bg-clip-padding ${g.bg} ${c === '%' ? 'text-center' : 'pl-1'}`}>{c}</th>
        )))}
    </tr>
);

const DataRow = ({ row, red }) => (
    <tr className="h-[34px]">
        <td className="border-b-2 border-l-2 border-[#cbcbcb] pl-9">
            <div className="flex h-8 items-start">
                <span className="w-8">{row.alert && <AlertIcon />}</span>
                <span className="w-[30px] pt-1">{row.closed && <PlusBoxIcon />}</span>
                <span className="w-[66px] pt-[2px]"><GearBoxIcon red={red} /></span>
                <span className="w-8">{!row.closed && <GearsIcon />}</span>
                <span className="w-6 pt-1">{row.closed && <BackIcon />}</span>
            </div>
        </td>
        <td className="border-b-2 border-l-2 border-[#cbcbcb] px-1">
            <div className="flex items-center">
                <a href="#commessa" className="w-[114px] text-[21px] font-bold leading-[30px] text-[#ff7d32] underline decoration-2 underline-offset-2">{row.id}</a>
                <span className="text-[19px] italic leading-[28px]">- Commes</span>
                <button aria-label="Dettaglio commessa" className="ml-auto mt-[2px]"><NoteIcon /></button>
            </div>
        </td>
        <td className="border-b-2 border-l-2 border-[#cbcbcb] px-1">
            <div className="flex items-center justify-between">
                <a href="#cliente" className="text-[21px] font-bold leading-[28px] text-[#ff7d32] underline decoration-2 underline-offset-2">{row.cliente}</a>
                <button aria-label="Dettaglio cliente"><NoteIcon /></button>
            </div>
        </td>
        {row.v.map((val, i) => (
            <td key={i} className={`border-b-2 border-l-2 border-[#cbcbcb] pr-1 text-right leading-[30px] last:border-r-2 ${AMOUNTS.includes(i) ? 'text-[24px]' : 'text-[22px]'}`}>
                {i === 0 && row.doc ? (
                    <div className="flex items-start justify-between pl-[2px]">
                        {row.doc === 'truck' ? <TruckIcon /> : <PagesIcon />}
                        {val}
                    </div>
                ) : val}
            </td>
        ))}
    </tr>
);

const ReportTable = () => (
    <table className="mt-9 w-full table-fixed border-separate border-spacing-0 text-black">
        <colgroup>
            <col className="w-[226px]" /><col className="w-[268px]" /><col className="w-[140px]" />
            <col className="w-[196px]" /><col className="w-[84px]" />
            <col className="w-[196px]" /><col className="w-[84px]" />
            <col className="w-[196px]" /><col className="w-[84px]" /><col className="w-[84px]" />
            <col className="w-[192px]" /><col className="w-[84px]" />
            <col className="w-[194px]" /><col className="w-[86px]" />
        </colgroup>
        <tbody>
            <tr className="h-[88px]">
                <th colSpan={3} className="pr-9 text-right align-bottom text-[27px] leading-8">Totali</th>
                {GROUPS.map((g) => (
                    <td key={g.title} colSpan={g.cols.length} className={`border-[6px] align-top ${g.bg} ${g.border} ${g.pad} ${g.total.length === 1 ? 'pt-1' : ''}`}>
                        {g.total.map((t, i) => (
                            <div key={i} className="flex items-start justify-between leading-[38px]">
                                <span className="text-[26px] leading-[34px]">{i === 0 ? '€' : '%'}</span>
                                <span className="text-[32px] font-bold">{t}</span>
                            </div>
                        ))}
                    </td>
                ))}
            </tr>
            <tr className="h-[52px]">
                <td colSpan={3}></td>
                {GROUPS.map((g) => (
                    <th key={g.title} colSpan={g.cols.length} className={`align-top ${g.bg}`}>
                        {g.sub ? (
                            <div>
                                <div className="text-[26px] leading-8">{g.title}</div>
                                <div className="text-[15px] font-normal leading-5">{g.sub}</div>
                            </div>
                        ) : (
                            <div className="pt-3 text-[31px] leading-10">{g.title}</div>
                        )}
                    </th>
                ))}
            </tr>
            <HeadRow name="Standard" color="bg-[#063595]" />
            {STANDARD.map((row) => <DataRow key={row.id} row={row} />)}
            <tr className="h-8"><td colSpan={14}></td></tr>
            <HeadRow name="Economie" color="bg-[#cb3116]" />
            {ECONOMIE.map((row) => <DataRow key={row.id} row={row} red />)}
        </tbody>
    </table>
);

const Dots = () => (
    <div className="flex flex-col gap-[6px] pt-1">
        {[0, 1, 2, 3].map((i) => <span key={i} className="h-1 w-1 bg-[#a8a8a8]"></span>)}
    </div>
);

const ReportTabs = () => (
    <div className="mr-[2px] flex h-[60px] bg-[linear-gradient(to_bottom,#b4b4b4_2px,#4c4c4c_2px,#4c4c4c_4px,#ededed_4px,#f1f1f1_24px,#c8c8c8_50px,#fff_50px,#fff_52px,#8e8e8e_52px,#787878_60px)] pl-1 pt-2 text-[29px] font-bold leading-[46px] text-[#666]">
        <div className="w-[585px] border-t-2 border-l-2 border-[#b0b0b0] bg-white pl-[30px] leading-[42px]">
            <a href="#quadro" className="text-[#ff7d32] underline decoration-2 underline-offset-2">Quadro Economico</a>
        </div>
        <svg className="h-[52px] w-[52px]" viewBox="0 0 52 52" aria-hidden="true">
            <path d="M0 0h1L52 52H0z" fill="#fff" />
            <path d="M0 1h1L51 52" fill="none" stroke="#8a8a8a" strokeWidth="2" />
        </svg>
        <div className="w-[735px] pl-2">
            <a href="#responsabili" className="underline decoration-2 underline-offset-2">Responsabili Commessa</a>
        </div>
        <Dots />
        <div className="w-[268px] pl-4">
            <a href="#clienti" className="underline decoration-2 underline-offset-2">Clienti</a>
        </div>
        <Dots />
        <div className="ml-auto flex items-start pr-1 text-[38px] leading-[52px] text-[#2b4a5a]">
            <span>A<span className="text-[#0e7f99]">N</span>TOS</span>
            <span className="mt-2 h-1 w-1 rounded-full bg-[#2b4a5a]"></span>
        </div>
    </div>
);

const Report = () => (
    <div className="mx-auto w-[2144px] max-w-full border-t-2 border-l-2 border-[#efefef]">
        <div className="border-2 border-[#a0a0a0] pb-[2px]">
            <ReportTabs />
            <div className="ml-1 mr-2 mt-[38px] border-2 border-[#cbcbcb] px-1 pb-10 pt-1 text-black">
                <h1 className="text-[39px] font-bold leading-[48px]">Prospetto Margine Economico Aziendale</h1>
                <p className="text-[21px] leading-6">*** i valori sono relativi al periodo di competenza specificato.</p>
                <ReportTable />
            </div>
        </div>
    </div>
);

const ReportFooter = () => (
    <div className="mt-[14px] border-t-2 border-[#a0a0a0]">
        <div className="flex items-center justify-end border-t-2 border-[#efefef] pr-[60px] pt-4">
            <button aria-label="Stampa"><PrinterIcon /></button>
            <div className="ml-[26px] mr-[30px] h-[62px] w-[2px] bg-[#9a9a9a]"></div>
            <button aria-label="Esporta in Word"><WordIcon /></button>
            <div className="mx-7 h-[62px] w-[2px] bg-[#9a9a9a]"></div>
            <button aria-label="Apri nel browser"><BrowserIcon /></button>
        </div>
    </div>
);

const Content = () => (
    <div className="flex min-w-0 flex-1 border-t-2 border-l-2 border-[#a0a0a0]">
        <div className="flex min-w-0 flex-1 border-t-2 border-l-2 border-[#696969] bg-white">
            <div className="mb-[90px] flex w-6 shrink-0 flex-col gap-1 border-r-2 border-[#a9b2bd] bg-[#f1f1fb] pt-[10px]">
                <button aria-label="Chiudi pannello"><Triangle points="21,1 21,19 1,10" className="h-[22px] w-5" /></button>
                <button aria-label="Apri pannello"><Triangle points="1,1 21,10 1,19" className="h-[22px] w-5" /></button>
            </div>
            <div className="min-w-0 flex-1 pl-4 pt-9 font-['Liberation_Sans',Arial,sans-serif]">
                <Report />
                <ReportFooter />
            </div>
            <div className="flex w-[34px] shrink-0 justify-center bg-[#f8f8f8] pt-8">
                <svg className="h-5 w-6" viewBox="0 0 24 20" aria-hidden="true">
                    <path d="M2 17 L12 5 L22 17" fill="none" stroke="#c4c4c4" strokeWidth="6" />
                </svg>
            </div>
            <div className="w-1 border-r-2 border-white bg-[#efefef]"></div>
        </div>
    </div>
);

export default function App() {
    return (
        <div className="flex h-screen flex-col overflow-hidden bg-[#efefef]">
            <Gradients />
            <TabBar />
            <div className="flex min-h-0 flex-1 flex-col border-x-4 border-[#a0a0a0]">
                <MainToolbar />
                <TreeToolbar />
                <FilterPanel />
                <div className="mt-[6px] flex min-h-0 flex-1">
                    <div className="flex border-t-2 border-l-2 border-[#a0a0a0]">
                        <TreePanel />
                    </div>
                    <div className="w-2 border-l-2 border-white"></div>
                    <Content />
                    <div className="w-[6px]"></div>
                    <div className="w-1 border-t-2 border-l-2 border-[#a0a0a0] bg-[#696969]"></div>
                </div>
            </div>
        </div>
    );
}
